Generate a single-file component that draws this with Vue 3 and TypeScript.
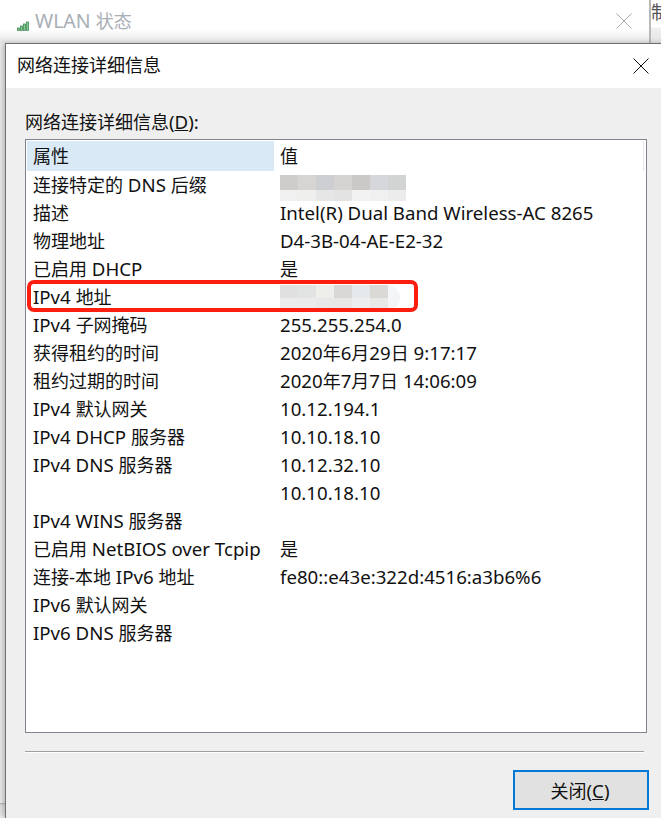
<script setup lang="ts">
interface Row {
  name: string
  value?: string
  mosaic?: string[][]
}
interface Segment {
  text: string
  latin: boolean
}

const suffixMosaic = [
  ['#cfcdcc', '#d7d5d4', '#cdcfd2', '#d6d4d2', '#cbc9c8', '#d5d7db', '#d2d4d3'],
  ['#f0f0f0', '#efefee', '#e6e6e6', '#e3e3e3', '#f2f2f2', '#f0f0f0', '#ececec'],
]
const ipMosaic = [
  ['#e0e0e0', '#e2e4e3', '#eeeeeb', '#d9d8d6', '#e6e9ec', '#dbd9d6'],
  ['#ebebeb', '#ebebeb', '#e8e8e8', '#e8e7e6', '#eceef0', '#e8e8e6'],
]

const rows: Row[] = [
  { name: '连接特定的 DNS 后缀', mosaic: suffixMosaic },
  { name: '描述', value: 'Intel(R) Dual Band Wireless-AC 8265' },
  { name: '物理地址', value: 'D4-3B-04-AE-E2-32' },
  { name: '已启用 DHCP', value: '是' },
  { name: 'IPv4 地址', mosaic: ipMosaic },
  { name: 'IPv4 子网掩码', value: '255.255.254.0' },
  { name: '获得租约的时间', value: '2020年6月29日 9:17:17' },
  { name: '租约过期的时间', value: '2020年7月7日 14:06:09' },
  { name: 'IPv4 默认网关', value: '10.12.194.1' },
  { name: 'IPv4 DHCP 服务器', value: '10.10.18.10' },
  { name: 'IPv4 DNS 服务器', value: '10.12.32.10' },
  { name: '', value: '10.10.18.10' },
  { name: 'IPv4 WINS 服务器' },
  { name: '已启用 NetBIOS over Tcpip', value: '是' },
  { name: '连接-本地 IPv6 地址', value: 'fe80::e43e:322d:4516:a3b6%6' },
  { name: 'IPv6 默认网关' },
  { name: 'IPv6 DNS 服务器' },
]

// Latin runs are set slightly larger than CJK runs, as in the original UI font.
function segments(text: string): Segment[] {
  const parts = text.match(/[\x20-\x7e]+|[^\x20-\x7e]+/g) ?? []
  return parts.map((part) => ({ text: part, latin: /^[\x20-\x7e]/.test(part) }))
}
</script>

<template>
  <div class="screen">
    <div class="behind">
      <div class="behind-title">
        <svg class="signal" width="14" height="11" viewBox="0 0 14 11">
          <rect x="0.5" y="8" width="2" height="2.5" fill="#7fd08f" stroke="#2f7a45" stroke-width="0.7" />
          <rect x="3.5" y="6" width="2" height="4.5" fill="#7fd08f" stroke="#2f7a45" stroke-width="0.7" />
          <rect x="6.5" y="4" width="2" height="6.5" fill="#7fd08f" stroke="#2f7a45" stroke-width="0.7" />
          <rect x="9.5" y="2" width="2" height="8.5" fill="#7fd08f" stroke="#2f7a45" stroke-width="0.7" />
        </svg>
        <span class="behind-text"><span class="behind-latin">WLAN </span>状态</span>
        <svg class="behind-close" width="16" height="16" viewBox="0 0 16 16">
          <path d="M0.5 0.5L15.5 15.5M15.5 0.5L0.5 15.5" stroke="#a8a8a8" fill="none" />
        </svg>
      </div>
      <div class="behind-edge">
        <span class="behind-glyph">制</span>
      </div>
    </div>

    <section class="dialog">
      <header class="titlebar">
        <span class="title">网络连接详细信息</span>
        <svg class="close" width="16" height="16" viewBox="0 0 16 16">
          <path d="M0.5 0.5L15.5 15.5M15.5 0.5L0.5 15.5" stroke="#111" fill="none" />
        </svg>
      </header>

      <div class="body">
        <label class="caption">网络连接详细信息<span class="latin">(<u>D</u>):</span></label>
        <div class="list">
          <div class="head">
            <div class="head-name">属性</div>
            <div class="head-value">值</div>
            <div class="head-sep"></div>
          </div>
          <div v-for="(row, i) in rows" :key="i" class="row">
            <div class="name">
              <span
                v-for="(s, n) in segments(row.name)"
                :key="n"
                :class="{ latin: s.latin }"
              >{{ s.text }}</span>
            </div>
            <div class="value">
              <template v-if="row.value">
                <span
                  v-for="(s, n) in segments(row.value)"
                  :key="n"
                  :class="{ latin: s.latin }"
                >{{ s.text }}</span>
              </template>
              <div v-else-if="row.mosaic" class="mosaic" :class="{ 'mosaic-ip': row.mosaic === ipMosaic }">
                <div v-for="(line, l) in row.mosaic" :key="l" class="mosaic-line">
                  <span
                    v-for="(c, k) in line"
                    :key="k"
                    class="cell"
                    :style="{ background: c }"
                  ></span>
                </div>
              </div>
            </div>
          </div>
          <div class="highlight"></div>
        </div>
        <div class="divider"></div>
        <div class="actions">
          <button class="btn" type="button">关闭<span class="latin">(<u>C</u>)</span></button>
        </div>
      </div>
    </section>
  </div>
</template>

<style>
html,
body {
  margin: 0;
  padding: 0;
  background: #fff;
}
</style>

<style scoped>
.screen {
  position: relative;
  width: 661px;
  height: 818px;
  overflow: hidden;
  background: linear-gradient(to bottom, #f2f2f2 0, #f2f2f2 803px, #b5b5b5 803px, #e6e6e6 805px, #f2f2f2 818px);
  font-family: "Noto Sans", "Noto Sans CJK SC", sans-serif;
  color: #111;
}
.latin {
  font-size: 18.67px;
}
.behind {
  position: absolute;
  left: 0;
  top: 0;
  right: 0;
  height: 43px;
  display: flex;
  background: #fff;
}
.behind-title {
  width: 649px;
  height: 43px;
  display: flex;
  align-items: center;
  box-sizing: border-box;
  padding: 0 17px 0 17px;
  background: linear-gradient(to bottom, #fff 0, #fff 29px, #e6e6e6 43px);
}
.signal {
  margin-top: 7px;
}
.behind-text {
  margin-left: 4px;
  font-size: 18px;
  color: #a9aeb5;
  margin-top: -3px;
}
.behind-latin {
  font-size: 19.5px;
}
.behind-close {
  margin-left: auto;
  margin-top: -1px;
}
.behind-edge {
  flex: 1;
  border-left: 2px solid #b8b8b8;
  background: linear-gradient(to bottom, #fff 0, #fff 27px, #f0f0f0 28px, #e4e4e4 43px);
  overflow: hidden;
}
.behind-glyph {
  display: block;
  font-size: 18px;
  line-height: 20px;
  margin-top: 2px;
  color: #555;
}
.dialog {
  position: relative;
  margin: 43px 0 0 5px;
  width: 700px;
  height: 775px;
  box-sizing: border-box;
  border-top: 1px solid #6f6f6f;
  border-left: 1px solid #6f6f6f;
  background: #efefef;
  box-shadow: -3px 0 5px rgba(0, 0, 0, 0.22);
}
.titlebar {
  height: 44px;
  display: flex;
  align-items: center;
  background: #fff;
  width: 655px;
  box-sizing: border-box;
  padding: 0 12px 0 11px;
}
.title {
  font-size: 18px;
  line-height: 42px;
  height: 44px;
}
.close {
  margin-left: auto;
}
.body {
  width: 655px;
  box-sizing: border-box;
  padding: 22px 0 0 19px;
}
.caption {
  display: block;
  font-size: 18px;
  line-height: 24px;
  height: 29px;
}
.list {
  position: relative;
  width: 622px;
  height: 594px;
  box-sizing: border-box;
  border: 1px solid #83838f;
  background: #fff;
  padding: 1px 0 0 1px;
}
.head {
  display: grid;
  grid-template-columns: 247px 1fr 1px;
  height: 31px;
  font-size: 18px;
  line-height: 30px;
}
.head-name {
  background: #d9e9f6;
  padding-left: 6px;
  height: 30px;
}
.head-value {
  padding-left: 6px;
}
.head-sep {
  background: #e5e5e5;
  height: 30px;
  transform: translateX(-2px);
}
.row {
  display: grid;
  grid-template-columns: 247px 1fr;
  height: 28px;
  font-size: 18px;
  line-height: 26px;
  white-space: nowrap;
}
.name {
  padding-left: 6px;
  height: 28px;
}
.value {
  padding-left: 6px;
  height: 28px;
}
.mosaic {
  position: relative;
  display: inline-flex;
  flex-direction: column;
  margin-top: 3px;
  vertical-align: top;
}
.mosaic-ip {
  margin-top: 1px;
}
.mosaic-ip::after {
  content: "";
  position: absolute;
  left: 100%;
  top: 0;
  width: 12px;
  height: 25px;
  background: #f3f5f7;
  border-radius: 0 12px 12px 0;
}
.mosaic-line {
  display: flex;
}
.mosaic-line:first-child .cell {
  height: 15px;
}
.mosaic-line:last-child .cell {
  height: 11px;
}
.mosaic-ip .mosaic-line:first-child .cell {
  height: 13px;
}
.mosaic-ip .mosaic-line:last-child .cell {
  height: 12px;
}
.cell {
  display: block;
  width: 18px;
}
.highlight {
  position: absolute;
  left: 1px;
  top: 140px;
  width: 391px;
  height: 32px;
  box-sizing: border-box;
  border: 4px solid #fc1f10;
  border-radius: 7px;
}
.divider {
  width: 619px;
  height: 1px;
  margin-top: 18px;
  background: #a0a0a0;
  border-bottom: 1px solid #fff;
}
.actions {
  display: flex;
  justify-content: flex-end;
  width: 624px;
  margin-top: 17px;
}
.btn {
  width: 136px;
  height: 40px;
  box-sizing: border-box;
  border: 2px solid #0078d7;
  background: #e1e1e1;
  font: inherit;
  font-size: 18px;
  color: #111;
  padding: 0 2px 0 0;
}
</style>
